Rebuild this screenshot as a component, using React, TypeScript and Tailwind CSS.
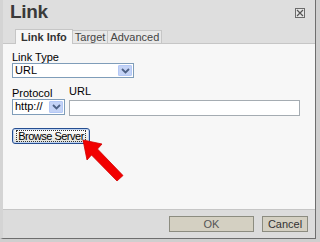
import React from "react"

function Chevron() {
  return (
    <svg width="9" height="6" viewBox="0 0 9 6" aria-hidden>
      <path d="M1 1 L4.5 4.5 L8 1" fill="none" stroke="#4d6185" strokeWidth="1.8" />
    </svg>
  )
}

function SelectBox({ value, className }: { value: string; className: string }) {
  return (
    <div className={`flex items-stretch border border-[#7f9db9] bg-white ${className}`}>
      <span className="flex-1 whitespace-nowrap pl-[2px] text-[11px] leading-[13px] text-black">{value}</span>
      <span className="m-[1px] flex w-[14px] items-center justify-center rounded-[1px] border border-[#b4c8f6] bg-[#c4d3f6]">
        <Chevron />
      </span>
    </div>
  )
}

function Arrow() {
  return (
    <svg className="pointer-events-none absolute left-0 top-0" width="320" height="242" viewBox="0 0 320 242" aria-hidden>
      <polygon
        points="83,140 102,144 97.5,149 123,175.5 117,181 91.5,155 87,160"
        fill="#f20000"
        stroke="#d00000"
        strokeWidth="0.8"
        strokeLinejoin="round"
      />
    </svg>
  )
}

export default function App() {
  return (
    <div className="relative h-[242px] w-[320px] overflow-hidden bg-[#cfcfcf] font-['Liberation_Sans',sans-serif] text-[11px] text-black">
      <div className="flex h-[239px] w-[316px] flex-col border-b border-r border-l-[3px] border-b-[#6e6e6e] border-l-[#d4d4d4] border-r-[#6e6e6e] bg-[#dedede]">
        <div className="relative h-[44px] border-b border-[#c6c6c6]">
          <div className="pl-[7px] pt-[2px] text-[19px] font-bold leading-[20px] tracking-[-0.3px] text-[#3a3a3a]">Link</div>
          <div className="absolute right-[10px] top-[8px] flex h-[10px] w-[10px] items-center justify-center border border-[#6b6b6b] bg-[#e6e6e6]">
            <svg width="8" height="8" viewBox="0 0 8 8" aria-hidden>
              <path d="M1 1 L7 7 M7 1 L1 7" stroke="#555" strokeWidth="1.2" />
            </svg>
          </div>
          <div className="absolute bottom-[-1px] left-[12px] flex items-end">
            <div className="h-[15px] border border-b-0 border-[#c6c6c6] bg-[#f7f7f7] px-[5px] text-[11px] font-bold leading-[14px] text-[#333]">
              Link Info
            </div>
            <div className="h-[14px] border border-l-0 border-[#c6c6c6] bg-[#e8e8e8] px-[2px] text-[11px] leading-[13px] text-[#444]">
              Target
            </div>
            <div className="h-[14px] border border-l-0 border-[#c6c6c6] bg-[#e8e8e8] px-[2px] text-[11px] leading-[13px] text-[#444]">
              Advanced
            </div>
          </div>
        </div>
        <div className="flex-1 bg-[#f7f7f7] px-[9px] pt-[8px]">
          <div className="text-[11px] leading-[11px]">Link Type</div>
          <SelectBox value="URL" className="h-[15px] w-[122px]" />
          <div className="mt-[10px] flex gap-[4px] pr-[6px]">
            <div className="flex flex-col">
              <span className="text-[11px] leading-[11px]">Protocol</span>
              <SelectBox value="http://" className="h-[16px] w-[53px]" />
            </div>
            <div className="flex flex-1 flex-col">
              <span className="-mt-[2px] text-[11px] leading-[11px]">URL</span>
              <div className="mt-[3px] h-[16px] border border-[#a5acb2] bg-white" />
            </div>
          </div>
          <div className="mt-[12px] flex h-[16px] w-[78px] items-center justify-center rounded-[3px] border border-[#264e91] bg-gradient-to-b from-[#ffffff] to-[#e2e2da] shadow-[inset_0_0_0_1px_#c0d4f2]">
            <span className="whitespace-nowrap border border-dotted border-[#333] px-[1px] text-[11px] leading-[10px] tracking-[-0.5px]">
              Browse Server
            </span>
          </div>
        </div>
        <div className="flex h-[29px] items-center justify-end gap-[8px] border-t border-[#c6c6c6] bg-[#dcdcdc] pr-[7px]">
          <div className="flex h-[16px] w-[85px] items-center justify-center border border-[#8c8c80] bg-[#d4d0c2] text-[11px] text-[#555]">
            OK
          </div>
          <div className="flex h-[16px] w-[46px] items-center justify-center border border-[#8c8c80] bg-[#d4d0c2] text-[11px] text-[#333]">
            Cancel
          </div>
        </div>
      </div>
      <Arrow />
    </div>
  )
}
